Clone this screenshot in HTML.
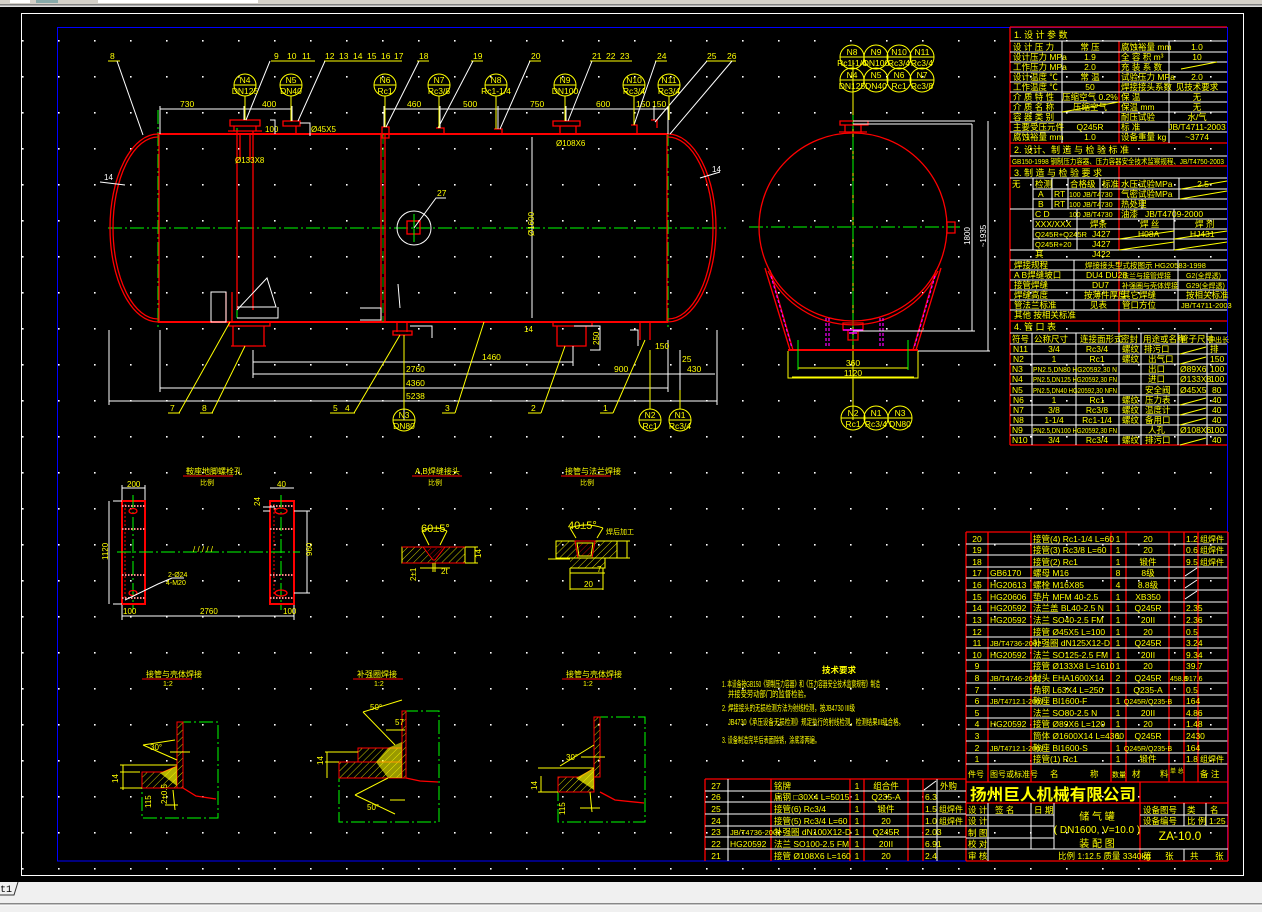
<!DOCTYPE html>
<html><head><meta charset="utf-8"><style>
html,body{margin:0;padding:0;background:#000;width:1262px;height:912px;overflow:hidden}
svg{display:block}
text{font-family:"Liberation Sans Narrow","Liberation Sans","WenQuanYi Zen Hei","Noto Sans CJK SC",sans-serif;fill:#ff0;font-size:8.5px}
.w{stroke:#fff;stroke-width:1;fill:none}
.r{stroke:#f00;stroke-width:1.3;fill:none}
.r2{stroke:#f00;stroke-width:2;fill:none}
.y{stroke:#ff0;stroke-width:1;fill:none}
.g{stroke:#0f0;stroke-width:1;fill:none;stroke-dasharray:14 3 2 3}
.gs{stroke:#0f0;stroke-width:1;fill:none}
.m{stroke:#f0f;stroke-width:1.2;fill:none;stroke-dasharray:3 2}
.c{text-anchor:middle}
.big{font-size:16px;font-weight:bold}
</style></head><body>
<svg width="1262" height="912" viewBox="0 0 1262 912" xmlns="http://www.w3.org/2000/svg">
<defs>
<pattern id="dots" x="22" y="4" width="36" height="36" patternUnits="userSpaceOnUse"><rect x="0" y="0" width="1.6" height="1.6" fill="#fff"/></pattern>
<pattern id="hat" width="5" height="5" patternUnits="userSpaceOnUse" patternTransform="rotate(45)"><line x1="0" y1="0" x2="0" y2="5" stroke="#ff0" stroke-width="0.8"/></pattern>
<pattern id="hatr" width="4" height="4" patternUnits="userSpaceOnUse" patternTransform="rotate(45)"><line x1="0" y1="0" x2="0" y2="4" stroke="#f00" stroke-width="0.8"/></pattern>
</defs>
<rect x="0" y="0" width="1262" height="912" fill="#000"/>
<rect x="0" y="0" width="1262" height="4" fill="#d4d0c8"/>
<rect x="10" y="0" width="20" height="3" fill="#fff"/><rect x="36" y="0" width="22" height="3" fill="#8aa"/><rect x="98" y="0" width="160" height="3" fill="#fff"/>
<rect x="0" y="4" width="1262" height="1.5" fill="#808080"/><rect x="0" y="5.5" width="1262" height="1.5" fill="#e0e0e0"/>
<rect x="0" y="882" width="1262" height="30" fill="#f0f0f0"/>
<rect x="0" y="903" width="1262" height="1.5" fill="#888"/><rect x="0" y="904.5" width="1262" height="1" fill="#fff"/>
<path d="M0,895 L14,895 L18,882" stroke="#333" fill="none"/>
<text x="0" y="892" style="fill:#000;font-family:'Liberation Mono',monospace;font-size:10px">t1</text>
<path d="M1,844 L12,864 M12,844 L1,864" class="w"/>
<rect x="0" y="7" width="1262" height="875" fill="url(#dots)"/>
<rect x="0" y="7" width="21" height="875" fill="#000"/>
<rect x="1243.5" y="7" width="19" height="875" fill="#000"/>
<rect x="21.5" y="13.5" width="1222" height="862" class="w"/>
<rect x="57.5" y="27.5" width="1170" height="833.5" stroke="#00f" fill="none"/>

<!-- ===== main vessel ===== -->
<path d="M108,228 L726,228" class="g"/>
<path d="M158,110 L158,330 M668,110 L668,330 M237,128 L237,318" class="g"/>
<path d="M158,134 L668,134 M158,322 L668,322" class="r2"/>
<path d="M158,134 A48,94 0 0 0 158,322 M158,137 A45,91 0 0 0 158,319" class="r"/>
<path d="M668,134 A48,94 0 0 1 668,322 M668,137 A45,91 0 0 1 668,319" class="r"/>
<path d="M159,134 L159,322 M667,134 L667,322" class="r"/>
<path d="M381,134 L381,322 M385,134 L385,322" class="r"/>
<path d="M383,134 L383,322" stroke="#0f0" stroke-width="0.7" stroke-dasharray="10 3"/>
<path d="M237,131 L237,310 M253,131 L253,310 M240,134 L240,160 M250,134 L250,160" class="r"/>
<path d="M230,120 L260,120 L260,126 L230,126 Z M234,126 L256,126 L256,131 L234,131 Z M228,131 L262,131" class="r"/>
<path d="M283,121 L300,121 L300,126 L283,126 Z M287,126 L296,126 L296,134" class="r"/>
<path d="M553,121 L580,121 L580,126 L553,126 Z M557,126 L576,126 L576,134 M560,126 L560,134" class="r"/>
<path d="M382,127 L389,127 L389,138 L382,138 Z M436,128 L444,128 L444,134 M494,129 L502,129 L502,134 M631,125 L637,125 L637,134 M651,120 L657,120 L657,128" class="r"/>
<path d="M229,322 L270,322 L270,326 L229,326 Z M233,326 L233,346 L264,346 L264,326 M231,346 L266,346" class="r"/>
<path d="M553,322 L592,322 L592,326 L553,326 Z M557,326 L557,346 L586,346 L586,326" class="r"/>
<path d="M397,322 L397,332 M407,322 L407,332 M393,331 L412,331 L412,335 L393,335 Z" class="r"/>
<path d="M640,322 L640,340 M650,322 L650,340" class="r"/>
<path d="M226,292 L226,322 M232,292 L232,322" class="r"/>
<path d="M237,310 L267,278 L276,307 L237,307 M237,318 L278,318 L278,307" class="w"/>
<path d="M398,284 L400,308 M360,308 L381,308 L381,320 L360,320" class="w"/>
<circle cx="414" cy="228" r="17" class="w"/><rect x="407" y="221" width="13" height="13" class="r"/>
<path d="M414,214 L414,242" class="gs"/>
<path d="M414,228 L436,198 L446,198" class="w"/><text x="437" y="196">27</text>
<path d="M532,137 L532,318" class="w"/><text x="534" y="236" transform="rotate(-90 534 236)" style="font-size:8px">Ø1600</text>
<path d="M160,109 L292,109 M384,109 L668,109" class="w"/>
<text x="180" y="107">730</text><text x="262" y="107">400</text><text x="407" y="107">460</text><text x="463" y="107">500</text><text x="530" y="107">750</text><text x="596" y="107">600</text><text x="636" y="107">150</text><text x="652" y="107">150</text>
<path d="M160,106 L160,134 M244,106 L244,120 M292,106 L292,121 M384,106 L384,127 M440,106 L440,128 M498,106 L498,129 M566,106 L566,121 M634,106 L634,125 M654,106 L654,120 M668,106 L668,134" class="w" stroke-width="0.6"/>
<text x="265" y="132" style="font-size:8px">100</text><text x="311" y="132" style="font-size:8px">Ø45X5</text><text x="235" y="163" style="font-size:8px">Ø133X8</text><text x="556" y="146" style="font-size:8px">Ø108X6</text>
<path d="M270,120 L275,120 L275,134 M300,123 L310,123 L310,136" class="w"/>
<path d="M253,362 L573,362 M404,362 L404,420 M253,374 L715,374 M160,388 L668,388 M109,401 L717,401" class="w"/>
<path d="M109,330 L109,405 M717,330 L717,405 M160,330 L160,392 M668,340 L668,392 M253,350 L253,378 M573,346 L573,366 M680,350 L680,390" class="w" stroke-width="0.6"/>
<text x="482" y="360">1460</text><text x="406" y="372">2760</text><text x="614" y="372">900</text><text x="687" y="372">430</text><text x="406" y="386">4360</text><text x="406" y="399">5238</text>
<text x="682" y="362">25</text><text x="655" y="349">150</text><text x="524" y="332" style="font-size:8px">14</text>
<path d="M574,326 L600,326 L600,350 L590,350 M630,330 L638,330 L638,346 M410,326 L432,326 L432,338" class="w"/>
<text x="592" y="342" transform="rotate(-90 597 340)" style="font-size:8px">250</text>
<path d="M211,292 L226,292 L226,322 L211,322 Z" class="w"/>
<text x="104" y="180" style="font-size:8px;fill:#fff">14</text><path d="M100,182 L125,185" class="w"/>
<text x="712" y="172" style="font-size:8px;fill:#fff">14</text><path d="M700,178 L720,172" class="w"/>
<path d="M108,61 L120,61 M271,61 L315,61 M324,61 L402,61 M417,61 L429,61 M471,61 L483,61 M529,61 L541,61 M590,61 L632,61 M655,61 L667,61 M706,61 L736,61" class="y"/>
<path d="M117,61 L143,135 M270,61 L246,120 M325,61 L298,121 M419,61 L386,127 M473,61 L438,128 M530,61 L500,129 M592,61 L568,121 M656,61 L634,125 M707,61 L655,122 M732,61 L670,134" class="w"/>
<text x="110" y="59">8</text><text x="274" y="59">9</text><text x="287" y="59">10</text><text x="302" y="59">11</text>
<text x="325" y="59">12</text><text x="339" y="59">13</text><text x="353" y="59">14</text><text x="367" y="59">15</text><text x="381" y="59">16</text><text x="394" y="59">17</text>
<text x="419" y="59">18</text><text x="473" y="59">19</text><text x="531" y="59">20</text><text x="592" y="59">21</text><text x="606" y="59">22</text><text x="620" y="59">23</text><text x="657" y="59">24</text><text x="707" y="59">25</text><text x="727" y="59">26</text>
<path d="M168,413 L180,413 M200,413 L213,413 M330,413 L355,413 M442,413 L455,413 M528,413 L541,413 M600,413 L613,413" class="y"/>
<path d="M179,413 L230,322 M212,413 L245,346 M354,413 L400,335 M455,413 L484,322 M541,413 L565,346 M613,413 L645,340" class="y"/>
<text x="170" y="411">7</text><text x="202" y="411">8</text><text x="333" y="411">5</text><text x="345" y="411">4</text><text x="445" y="411">3</text><text x="531" y="411">2</text><text x="603" y="411">1</text>
<g class="y">
<path d="M245,96 L245,120 M291,96 L291,121 M385,96 L385,127 M439,96 L439,128 M496,96 L496,129 M565,96 L565,121 M634,96 L634,125 M669,96 L669,120"/>
<circle cx="245" cy="85" r="11"/><circle cx="291" cy="85" r="11"/><circle cx="385" cy="85" r="11"/><circle cx="439" cy="85" r="11"/><circle cx="496" cy="85" r="11"/><circle cx="565" cy="85" r="11"/><circle cx="634" cy="85" r="11"/><circle cx="669" cy="85" r="11"/>
<path d="M234,85 L256,85 M280,85 L302,85 M374,85 L396,85 M428,85 L450,85 M485,85 L507,85 M554,85 L576,85 M623,85 L645,85 M658,85 L680,85"/>
<path d="M404,335 L404,409 M650,350 L650,409 M680,390 L680,409"/>
<circle cx="404" cy="420" r="11"/><circle cx="650" cy="420" r="11"/><circle cx="680" cy="420" r="11"/>
<path d="M393,420 L415,420 M639,420 L661,420 M669,420 L691,420"/>
</g>
<g style="font-size:8px">
<text x="245" y="83" class="c">N4</text><text x="245" y="94" class="c">DN125</text>
<text x="291" y="83" class="c">N5</text><text x="291" y="94" class="c">DN40</text>
<text x="385" y="83" class="c">N6</text><text x="385" y="94" class="c">Rc1</text>
<text x="439" y="83" class="c">N7</text><text x="439" y="94" class="c">Rc3/8</text>
<text x="496" y="83" class="c">N8</text><text x="496" y="94" class="c">Rc1-1/4</text>
<text x="565" y="83" class="c">N9</text><text x="565" y="94" class="c">DN100</text>
<text x="634" y="83" class="c">N10</text><text x="634" y="94" class="c">Rc3/4</text>
<text x="669" y="83" class="c">N11</text><text x="669" y="94" class="c">Rc3/4</text>
<text x="404" y="418" class="c">N3</text><text x="404" y="429" class="c">DN80</text>
<text x="650" y="418" class="c">N2</text><text x="650" y="429" class="c">Rc1</text>
<text x="680" y="418" class="c">N1</text><text x="680" y="429" class="c">Rc3/4</text>
</g>

<!-- ===== side view ===== -->
<path d="M749,227 L960,227" class="g"/>
<path d="M853,60 L853,420" class="y"/>
<path d="M853,115 L853,345" class="g"/>
<circle cx="853" cy="227" r="94" class="r"/>
<path d="M768,266 A94,94 0 0 0 938,266" class="r" transform="translate(0,5)"/>
<path d="M840,121 L868,121 L868,125 L840,125 Z M845,125 L845,132 L861,132 L861,125 M839,132 L867,132" class="r"/>
<path d="M947,222 L955,222 L955,233 L947,233 Z" class="r"/>
<path d="M765,268 L790,350 M770,270 L793,350 M941,268 L916,350 M936,270 L913,350" class="r"/>
<path d="M771,276 L792,348 M935,276 L914,348 M826,318 L826,348 M829,318 L829,348 M880,318 L880,348 M883,318 L883,348" class="m"/>
<path d="M843,323 L863,323 L863,330 L843,330 Z M848,330 L858,330 L858,340 L848,340 Z" class="r"/><path d="M843,330 L863,330 M849,333 L857,333" stroke="#f0f" stroke-width="1.5"/>
<path d="M788,350 L918,350" class="r2"/>
<path d="M788,351 L788,378 L918,378 L918,351 M798,368 L908,368 M792,377 L914,377" class="y"/>
<path d="M798,340 L798,370 M908,340 L908,370" class="gs"/>
<text x="853" y="366" class="c">360</text><text x="853" y="376" class="c">1120</text>
<path d="M853,121 L975,121 M853,124 L972,124 M853,331 L975,331 M918,351 L990,351 M972,124 L972,331 M988,121 L988,351" class="w"/>
<text x="970" y="236" transform="rotate(-90 970 236)" style="fill:#fff;font-size:8px" class="c">1800</text>
<text x="986" y="236" transform="rotate(-90 986 236)" style="fill:#fff;font-size:8px" class="c">~1935</text>
<g class="y">
<circle cx="852" cy="57" r="12"/><circle cx="876" cy="57" r="12"/><circle cx="899" cy="57" r="12"/><circle cx="922" cy="57" r="12"/>
<circle cx="852" cy="80" r="12"/><circle cx="876" cy="80" r="12"/><circle cx="899" cy="80" r="12"/><circle cx="922" cy="80" r="12"/>
<path d="M840,57 L934,57 M840,80 L934,80"/>
<circle cx="853" cy="418" r="12"/><circle cx="876" cy="418" r="12"/><circle cx="900" cy="418" r="12"/>
<path d="M841,418 L912,418"/>
</g>
<g style="font-size:7.5px">
<text x="852" y="55" class="c">N8</text><text x="852" y="66" class="c">Rc1-1/4</text>
<text x="876" y="55" class="c">N9</text><text x="876" y="66" class="c">DN100</text>
<text x="899" y="55" class="c">N10</text><text x="899" y="66" class="c">Rc3/4</text>
<text x="922" y="55" class="c">N11</text><text x="922" y="66" class="c">Rc3/4</text>
<text x="852" y="78" class="c">N4</text><text x="852" y="89" class="c">DN125</text>
<text x="876" y="78" class="c">N5</text><text x="876" y="89" class="c">DN40</text>
<text x="899" y="78" class="c">N6</text><text x="899" y="89" class="c">Rc1</text>
<text x="922" y="78" class="c">N7</text><text x="922" y="89" class="c">Rc3/8</text>
<text x="853" y="416" class="c">N2</text><text x="853" y="427" class="c">Rc1</text>
<text x="876" y="416" class="c">N1</text><text x="876" y="427" class="c">Rc3/4</text>
<text x="900" y="416" class="c">N3</text><text x="900" y="427" class="c">DN80</text>
</g>

<!-- ===== top-right table ===== -->
<path d="M1010,27 L1010,445 M1010,27 L1227,27" class="r"/>
<path d="M1010,143 L1227,143 M1010,166 L1227,166 M1010,321 L1227,321 M1010,445 L1227,445 M1119,41 L1119,143 M1119,166 L1119,250 M1119,260 L1119,333" class="r"/>
<g class="w">
<path d="M1010,41 L1227,41 M1010,52 L1227,52 M1010,62 L1227,62 M1010,72 L1227,72 M1010,82 L1227,82 M1010,92 L1227,92 M1010,102 L1227,102 M1010,112 L1227,112 M1010,122 L1227,122 M1010,132 L1227,132 M1010,156 L1227,156"/>
<path d="M1062,41 L1062,143 M1169,41 L1169,143"/>
<path d="M1010,178 L1227,178 M1033,189 L1227,189 M1033,199 L1227,199 M1010,209 L1227,209 M1033,219 L1227,219 M1033,229 L1227,229 M1033,239 L1227,239 M1010,250 L1227,250 M1010,260 L1227,260 M1010,270 L1227,270 M1010,280 L1227,280 M1010,290 L1227,290 M1010,300 L1227,300 M1010,310 L1227,310 M1010,333 L1227,333"/>
<path d="M1033,178 L1033,250 M1052,178 L1052,209 M1068,178 L1068,209 M1100,178 L1100,209 M1179,178 L1179,199 M1142,199 L1142,209 M1077,209 L1077,250 M1174,209 L1174,250 M1074,260 L1074,310 M1178,260 L1178,310"/>
<path d="M1010,344 L1227,344 M1010,354 L1227,354 M1010,364 L1227,364 M1010,374 L1227,374 M1010,384 L1227,384 M1010,395 L1227,395 M1010,405 L1227,405 M1010,415 L1227,415 M1010,425 L1227,425 M1010,435 L1227,435"/>
<path d="M1032,333 L1032,445 M1076,333 L1076,445 M1119,333 L1119,445 M1141,333 L1141,445 M1178,333 L1178,445 M1207,333 L1207,445"/>
</g>
<g class="y" stroke-width="0.8">
<path d="M1062,112 L1119,102 M1181,69 L1217,62 M1181,189 L1227,181 M1180,199 L1227,191 M1119,239 L1174,231 M1174,239 L1227,231 M1119,250 L1174,242 M1174,250 L1227,242 M1180,354 L1206,347 M1180,364 L1206,357 M1180,405 L1206,398 M1180,415 L1206,408 M1180,425 L1206,418 M1180,445 L1206,438"/>
</g>
<g style="font-size:8px">
<text x="1014" y="38" style="font-size:9px">1. 设 计 参 数</text>
<text x="1013" y="50">设 计 压 力</text><text x="1090" y="50" class="c">常 压</text><text x="1121" y="50">腐蚀裕量 mm</text><text x="1197" y="50" class="c">1.0</text>
<text x="1013" y="60">设计压力 MPa</text><text x="1090" y="60" class="c">1.9</text><text x="1121" y="60">全 容 积 m³</text><text x="1197" y="60" class="c">10</text>
<text x="1013" y="70">工作压力 MPa</text><text x="1090" y="70" class="c">2.0</text><text x="1121" y="70">充 装 系 数</text>
<text x="1013" y="80">设计温度 ℃</text><text x="1090" y="80" class="c">常 温</text><text x="1121" y="80">试验压力 MPa</text><text x="1197" y="80" class="c">2.0</text>
<text x="1013" y="90">工作温度 ℃</text><text x="1090" y="90" class="c">50</text><text x="1121" y="90">焊接接头系数</text><text x="1197" y="90" class="c">见技术要求</text>
<text x="1013" y="100">介 质 特 性</text><text x="1090" y="100" class="c">压缩空气 0.2%</text><text x="1121" y="100">保 温</text><text x="1197" y="100" class="c">无</text>
<text x="1013" y="110">介 质 名 称</text><text x="1090" y="110" class="c">压缩空气</text><text x="1121" y="110">保温 mm</text><text x="1197" y="110" class="c">无</text>
<text x="1013" y="120">容 器 类 别</text><text x="1121" y="120">耐压试验</text><text x="1197" y="120" class="c">水/气</text>
<text x="1013" y="130">主要受压元件</text><text x="1090" y="130" class="c">Q245R</text><text x="1121" y="130">标 准</text><text x="1197" y="130" class="c">JB/T4711-2003</text>
<text x="1013" y="140">腐蚀裕量 mm</text><text x="1090" y="140" class="c">1.0</text><text x="1121" y="140">设备重量 kg</text><text x="1197" y="140" class="c">~3774</text>
<text x="1014" y="153" style="font-size:9px">2. 设计、制 造 与 检 验 标 准</text>
<text x="1012" y="164" style="font-size:7.5px" textLength="212" lengthAdjust="spacingAndGlyphs">GB150-1998 钢制压力容器、压力容器安全技术监察规程、JB/T4750-2003</text>
<text x="1014" y="176" style="font-size:9px">3. 制 造 与 检 验 要 求</text>
<text x="1012" y="187">无</text><text x="1035" y="187">检测</text><text x="1070" y="187">合格级</text><text x="1102" y="187">标准</text><text x="1121" y="187">水压试验MPa</text><text x="1203" y="187" class="c">2.5</text>
<text x="1038" y="197">A</text><text x="1054" y="197">RT</text><text x="1069" y="197" style="font-size:7px">100 JB/T4730</text><text x="1121" y="197">气密试验MPa</text>
<text x="1038" y="207">B</text><text x="1054" y="207">RT</text><text x="1069" y="207" style="font-size:7px">100 JB/T4730</text><text x="1121" y="207">热处理</text>
<text x="1035" y="217">C D</text><text x="1069" y="217" style="font-size:7px">100 JB/T4730</text><text x="1121" y="217">油漆</text><text x="1174" y="217" class="c">JB/T4709-2000</text>
<text x="1035" y="227">XXX/XXX</text><text x="1090" y="227">焊条</text><text x="1140" y="227">焊 丝</text><text x="1195" y="227">焊 剂</text>
<text x="1035" y="237" style="font-size:7.5px">Q245R+Q245R</text><text x="1092" y="237">J427</text><text x="1138" y="237">H08A</text><text x="1190" y="237">HJ431</text>
<text x="1035" y="247" style="font-size:7.5px">Q245R+20</text><text x="1092" y="247">J427</text>
<text x="1035" y="257">其</text><text x="1092" y="257">J422</text>
<text x="1014" y="268">焊接规程</text><text x="1085" y="268" style="font-size:7.5px">焊接接头型式按图示 HG20583-1998</text>
<text x="1014" y="278">A B焊缝坡口</text><text x="1086" y="278">DU4 DU26</text><text x="1122" y="278" style="font-size:7px">法兰与接管焊接</text><text x="1186" y="278" style="font-size:7px">G2(全焊透)</text>
<text x="1014" y="288">接管焊缝</text><text x="1092" y="288">DU7</text><text x="1122" y="288" style="font-size:7px">补强圈与壳体焊接</text><text x="1186" y="288" style="font-size:7px">G29(全焊透)</text>
<text x="1014" y="298">焊缝高度</text><text x="1084" y="298">按薄件厚度</text><text x="1122" y="298">其它焊缝</text><text x="1186" y="298">按相关标准</text>
<text x="1014" y="308">管法兰标准</text><text x="1090" y="308">见表</text><text x="1122" y="308">管口方位</text><text x="1181" y="308" style="font-size:7.5px">JB/T4711-2003</text>
<text x="1014" y="318">其他 按相关标准</text>
<text x="1014" y="330" style="font-size:9px">4. 管 口 表</text>
<text x="1012" y="342">符号</text><text x="1034" y="342">公称尺寸</text><text x="1080" y="342">连接面形式</text><text x="1121" y="342">密封</text><text x="1143" y="342">用途或名称</text><text x="1180" y="342">管子尺寸</text><text x="1208" y="342" style="font-size:7px">伸出长</text>
</g>
<g style="font-size:8px">
<text x="1013" y="352">N11</text><text x="1054" y="352" class="c">3/4</text><text x="1097" y="352" class="c">Rc3/4</text><text x="1122" y="352">螺纹</text><text x="1144" y="352">排污口</text><text x="1210" y="352">排</text>
<text x="1013" y="362">N2</text><text x="1054" y="362" class="c">1</text><text x="1097" y="362" class="c">Rc1</text><text x="1122" y="362">螺纹</text><text x="1148" y="362">出气口</text><text x="1210" y="362">150</text>
<text x="1012" y="372">N3</text><text x="1033" y="372" style="font-size:7px" textLength="84" lengthAdjust="spacingAndGlyphs">PN2.5,DN80 HG20592,30 N</text><text x="1148" y="372">出口</text><text x="1180" y="372">Ø89X6</text><text x="1210" y="372">100</text>
<text x="1012" y="382">N4</text><text x="1033" y="382" style="font-size:7px" textLength="84" lengthAdjust="spacingAndGlyphs">PN2.5,DN125 HG20592,30 FN</text><text x="1148" y="382">进口</text><text x="1180" y="382">Ø133X8</text><text x="1210" y="382">100</text>
<text x="1012" y="393">N5</text><text x="1033" y="393" style="font-size:7px" textLength="84" lengthAdjust="spacingAndGlyphs">PN2.5,DN40 HG20592,30 NFN</text><text x="1145" y="393">安全阀</text><text x="1180" y="393">Ø45X5</text><text x="1212" y="393">80</text>
<text x="1013" y="403">N6</text><text x="1054" y="403" class="c">1</text><text x="1097" y="403" class="c">Rc1</text><text x="1122" y="403">螺纹</text><text x="1145" y="403">压力表</text><text x="1212" y="403">40</text>
<text x="1013" y="413">N7</text><text x="1054" y="413" class="c">3/8</text><text x="1097" y="413" class="c">Rc3/8</text><text x="1122" y="413">螺纹</text><text x="1145" y="413">温度计</text><text x="1212" y="413">40</text>
<text x="1013" y="423">N8</text><text x="1054" y="423" class="c">1-1/4</text><text x="1097" y="423" class="c">Rc1-1/4</text><text x="1122" y="423">螺纹</text><text x="1145" y="423">备用口</text><text x="1212" y="423">40</text>
<text x="1012" y="433">N9</text><text x="1033" y="433" style="font-size:7px" textLength="84" lengthAdjust="spacingAndGlyphs">PN2.5,DN100 HG20592,30 FN</text><text x="1148" y="433">人孔</text><text x="1180" y="433">Ø108X6</text><text x="1210" y="433">100</text>
<text x="1012" y="443">N10</text><text x="1054" y="443" class="c">3/4</text><text x="1097" y="443" class="c">Rc3/4</text><text x="1122" y="443">螺纹</text><text x="1145" y="443">排污口</text><text x="1212" y="443">40</text>
</g>

<!-- ===== parts list right ===== -->
<path d="M966,532 L1228,532 M966,532 L966,861 M988,532 L988,782 M1031,532 L1031,782 M1111,532 L1111,782 M1126,532 L1126,782 M1169,532 L1169,782 M1184,532 L1184,782 M1198,532 L1198,782 M966,782 L1228,782" class="r"/>
<path d="M966,544 L1228,544 M966,555 L1228,555 M966,567 L1228,567 M966,578 L1228,578 M966,590 L1228,590 M966,602 L1228,602 M966,613 L1228,613 M966,625 L1228,625 M966,637 L1228,637 M966,648 L1228,648 M966,660 L1228,660 M966,671 L1228,671 M966,683 L1228,683 M966,695 L1228,695 M966,706 L1228,706 M966,718 L1228,718 M966,729 L1228,729 M966,741 L1228,741 M966,753 L1228,753 M966,764 L1228,764" class="w"/>
<path d="M1185,576 L1197,568 M1185,588 L1197,580 M1185,599 L1197,591" class="w"/>
<g style="font-size:9px">
<text x="977" y="542" class="c">20</text><text x="1033" y="542">接管(4) Rc1-1/4 L=60</text><text x="1118" y="542" class="c">1</text><text x="1148" y="542" class="c">20</text><text x="1186" y="542">1.2</text><text x="1200" y="542" style="font-size:8px">组焊件</text>
<text x="977" y="553" class="c">19</text><text x="1033" y="553">接管(3) Rc3/8 L=60</text><text x="1118" y="553" class="c">1</text><text x="1148" y="553" class="c">20</text><text x="1186" y="553">0.6</text><text x="1200" y="553" style="font-size:8px">组焊件</text>
<text x="977" y="565" class="c">18</text><text x="1033" y="565">接管(2) Rc1</text><text x="1118" y="565" class="c">1</text><text x="1148" y="565" class="c">锻件</text><text x="1186" y="565">9.5</text><text x="1200" y="565" style="font-size:8px">组焊件</text>
<text x="977" y="576" class="c">17</text><text x="990" y="576">GB6170</text><text x="1033" y="576">螺母 M16</text><text x="1118" y="576" class="c">8</text><text x="1148" y="576" class="c">8级</text>
<text x="977" y="588" class="c">16</text><text x="990" y="588">HG20613</text><text x="1033" y="588">螺栓 M16X85</text><text x="1118" y="588" class="c">4</text><text x="1148" y="588" class="c">8.8级</text>
<text x="977" y="600" class="c">15</text><text x="990" y="600">HG20606</text><text x="1033" y="600">垫片 MFM 40-2.5</text><text x="1118" y="600" class="c">1</text><text x="1148" y="600" class="c">XB350</text>
<text x="977" y="611" class="c">14</text><text x="990" y="611">HG20592</text><text x="1033" y="611">法兰盖 BL40-2.5 N</text><text x="1118" y="611" class="c">1</text><text x="1148" y="611" class="c">Q245R</text><text x="1186" y="611">2.35</text>
<text x="977" y="623" class="c">13</text><text x="990" y="623">HG20592</text><text x="1033" y="623">法兰 SO40-2.5 FM</text><text x="1118" y="623" class="c">1</text><text x="1148" y="623" class="c">20II</text><text x="1186" y="623">2.36</text>
<text x="977" y="635" class="c">12</text><text x="1033" y="635">接管 Ø45X5 L=100</text><text x="1118" y="635" class="c">1</text><text x="1148" y="635" class="c">20</text><text x="1186" y="635">0.5</text>
<text x="977" y="646" class="c">11</text><text x="990" y="646" style="font-size:7.5px">JB/T4736-2002</text><text x="1033" y="646">补强圈 dN125X12-D</text><text x="1118" y="646" class="c">1</text><text x="1148" y="646" class="c">Q245R</text><text x="1186" y="646">3.24</text>
<text x="977" y="658" class="c">10</text><text x="990" y="658">HG20592</text><text x="1033" y="658">法兰 SO125-2.5 FM</text><text x="1118" y="658" class="c">1</text><text x="1148" y="658" class="c">20II</text><text x="1186" y="658">9.34</text>
<text x="977" y="669" class="c">9</text><text x="1033" y="669">接管 Ø133X8 L=1610</text><text x="1118" y="669" class="c">1</text><text x="1148" y="669" class="c">20</text><text x="1186" y="669">39.7</text>
<text x="977" y="681" class="c">8</text><text x="990" y="681" style="font-size:7.5px">JB/T4746-2002</text><text x="1033" y="681">封头 EHA1600X14</text><text x="1118" y="681" class="c">2</text><text x="1148" y="681" class="c">Q245R</text><text x="1170" y="681" style="font-size:7px">458.8</text><text x="1185" y="681" style="font-size:7px">917.6</text>
<text x="977" y="693" class="c">7</text><text x="1033" y="693">角钢 L63X4 L=250</text><text x="1118" y="693" class="c">1</text><text x="1148" y="693" class="c">Q235-A</text><text x="1186" y="693">0.5</text>
<text x="977" y="704" class="c">6</text><text x="990" y="704" style="font-size:7px">JB/T4712.1-2007</text><text x="1033" y="704">鞍座 BI1600-F</text><text x="1118" y="704" class="c">1</text><text x="1148" y="704" class="c" style="font-size:7px">Q245R/Q235-B</text><text x="1186" y="704">164</text>
<text x="977" y="716" class="c">5</text><text x="1033" y="716">法兰 SO80-2.5 N</text><text x="1118" y="716" class="c">1</text><text x="1148" y="716" class="c">20II</text><text x="1186" y="716">4.86</text>
<text x="977" y="727" class="c">4</text><text x="990" y="727">HG20592</text><text x="1033" y="727">接管 Ø89X6 L=120</text><text x="1118" y="727" class="c">1</text><text x="1148" y="727" class="c">20</text><text x="1186" y="727">1.48</text>
<text x="977" y="739" class="c">3</text><text x="1033" y="739" style="font-size:8.5px">筒体 Ø1600X14 L=4360</text><text x="1118" y="739" class="c">1</text><text x="1148" y="739" class="c">Q245R</text><text x="1186" y="739">2430</text>
<text x="977" y="751" class="c">2</text><text x="990" y="751" style="font-size:7px">JB/T4712.1-2007</text><text x="1033" y="751">鞍座 BI1600-S</text><text x="1118" y="751" class="c">1</text><text x="1148" y="751" class="c" style="font-size:7px">Q245R/Q235-B</text><text x="1186" y="751">164</text>
<text x="977" y="762" class="c">1</text><text x="1033" y="762">接管(1) Rc1</text><text x="1118" y="762" class="c">1</text><text x="1148" y="762" class="c">锻件</text><text x="1186" y="762">1.8</text><text x="1200" y="762" style="font-size:8px">组焊件</text>
<text x="968" y="777" style="font-size:8px">件号</text><text x="990" y="777" style="font-size:8px">图号或标准号</text><text x="1050" y="777">名</text><text x="1090" y="777">称</text><text x="1112" y="777" style="font-size:7px">数量</text><text x="1132" y="777">材</text><text x="1160" y="777">料</text><text x="1170" y="773" style="font-size:6px">单 总</text><text x="1200" y="777">备 注</text>
</g>

<!-- ===== bottom-left parts table ===== -->
<path d="M705,779 L966,779 M705,779 L705,861 M771,779 L771,861 M850,779 L850,861 M864,779 L864,861 M908,779 L908,861 M923,779 L923,861" class="r"/>
<path d="M705,791 L966,791 M705,802 L966,802 M705,814 L966,814 M705,826 L966,826 M705,837 L966,837 M705,849 L966,849 M728,779 L728,861 M937,779 L937,861" class="w"/>
<path d="M924,790 L936,781" class="w"/>
<g style="font-size:9px">
<text x="716" y="789" class="c">27</text><text x="774" y="789">铭牌</text><text x="857" y="789" class="c">1</text><text x="886" y="789" class="c">组合件</text><text x="940" y="789">外购</text>
<text x="716" y="800" class="c">26</text><text x="774" y="800">扁钢 □30X4 L=5015</text><text x="857" y="800" class="c">1</text><text x="886" y="800" class="c">Q235-A</text><text x="925" y="800">6.3</text>
<text x="716" y="812" class="c">25</text><text x="774" y="812">接管(6) Rc3/4</text><text x="857" y="812" class="c">1</text><text x="886" y="812" class="c">锻件</text><text x="925" y="812">1.5</text><text x="939" y="812" style="font-size:8px">组焊件</text>
<text x="716" y="824" class="c">24</text><text x="774" y="824">接管(5) Rc3/4 L=60</text><text x="857" y="824" class="c">1</text><text x="886" y="824" class="c">20</text><text x="925" y="824">1.0</text><text x="939" y="824" style="font-size:8px">组焊件</text>
<text x="716" y="835" class="c">23</text><text x="730" y="835" style="font-size:7.5px">JB/T4736-2002</text><text x="774" y="835">补强圈 dN100X12-D</text><text x="857" y="835" class="c">1</text><text x="886" y="835" class="c">Q245R</text><text x="925" y="835">2.03</text>
<text x="716" y="847" class="c">22</text><text x="730" y="847">HG20592</text><text x="774" y="847">法兰 SO100-2.5 FM</text><text x="857" y="847" class="c">1</text><text x="886" y="847" class="c">20II</text><text x="925" y="847">6.91</text>
<text x="716" y="859" class="c">21</text><text x="774" y="859">接管 Ø108X6 L=160</text><text x="857" y="859" class="c">1</text><text x="886" y="859" class="c">20</text><text x="925" y="859">2.4</text>
</g>

<!-- ===== title block ===== -->
<path d="M966,803 L1228,803 M1140,782 L1140,861 M966,861 L1228,861 M1228,532 L1228,861" class="r"/>
<path d="M966,815 L1054,815 M966,826 L1054,826 M966,838 L1054,838 M966,849 L1054,849 M988,803 L988,861 M1031,803 L1031,849 M1054,803 L1054,849 M1054,849 L1140,849 M1140,815 L1228,815 M1140,826 L1228,826 M1140,849 L1228,849 M1184,803 L1184,826 M1184,849 L1184,861 M1206,803 L1206,826" class="w"/>
<text x="970" y="800" class="big" textLength="166" lengthAdjust="spacingAndGlyphs">扬州巨人机械有限公司</text>
<g style="font-size:8px">
<text x="968" y="813">设 计</text><text x="995" y="813">签 名</text><text x="1034" y="813">日 期</text>
<text x="968" y="824">设 计</text><text x="968" y="836">制 图</text><text x="968" y="847">校 对</text><text x="968" y="859">审 核</text>
<text x="1143" y="813">设备图号</text><text x="1187" y="813">类</text><text x="1210" y="813">名</text>
<text x="1143" y="824">设备编号</text><text x="1187" y="824">比 例</text><text x="1209" y="824">1:25</text>
<text x="1143" y="859">第</text><text x="1165" y="859">张</text><text x="1190" y="859">共</text><text x="1215" y="859">张</text>
<text x="1058" y="859">比例 1:12.5 质量 3340kg</text>
</g>
<text x="1097" y="820" class="c" style="font-size:10px">储 气 罐</text>
<text x="1097" y="833" class="c" style="font-size:10px">( DN1600, V=10.0 )</text>
<text x="1097" y="847" class="c" style="font-size:10px">装 配 图</text>
<text x="1180" y="840" class="c" style="font-size:12px">ZA-10.0</text>

<!-- ===== technical notes ===== -->
<g style="font-size:8.5px">
<text x="822" y="673" style="font-weight:bold">技术要求</text>
<text x="722" y="687" textLength="158" lengthAdjust="spacingAndGlyphs">1. 本设备按GB150《钢制压力容器》和《压力容器安全技术监察规程》制造</text>
<text x="728" y="697" textLength="82" lengthAdjust="spacingAndGlyphs">并接受劳动部门的监督检验。</text>
<text x="722" y="711" textLength="133" lengthAdjust="spacingAndGlyphs">2. 焊接接头的无损检测方法为射线检测，按JB4730 III级</text>
<text x="728" y="725" textLength="176" lengthAdjust="spacingAndGlyphs">JB4730《承压设备无损检测》规定执行的射线检测，检测结果III级合格。</text>
<text x="722" y="743" textLength="98" lengthAdjust="spacingAndGlyphs">3. 设备制造完毕后表面除锈，涂底漆两遍。</text>
</g>

<!-- ===== detail view 1 ===== -->
<text x="186" y="474" style="font-size:8px">鞍座地脚螺栓孔</text><path d="M183,476 L233,476" stroke="#f00"/><text x="200" y="485" style="font-size:7px">比例</text>
<rect x="122" y="501" width="23" height="103" class="r2"/><rect x="270" y="501" width="24" height="103" class="r2"/>
<path d="M125,504 L125,600 M274,504 L274,600" stroke="#f00" stroke-dasharray="2 2"/>
<path d="M122,506 L145,506 M122,529 L145,529 M122,575 L145,575 M122,598 L145,598 M270,506 L294,506 M270,529 L294,529 M270,575 L294,575 M270,598 L294,598" stroke="#f88" stroke-width="2" stroke-dasharray="1.5 1.5"/>
<path d="M117,552 L300,552" class="g"/><path d="M133,495 L133,610 M281,495 L281,610" class="g"/>
<ellipse cx="133" cy="511" rx="4" ry="2.5" class="r"/><ellipse cx="281" cy="511" rx="6" ry="3" class="r"/><ellipse cx="281" cy="593" rx="6" ry="3" class="r"/><ellipse cx="133" cy="593" rx="4" ry="2.5" class="r"/>
<path d="M122,488 L145,488 M122,485 L122,500 M145,485 L145,500 M270,488 L294,488 M113,501 L122,501 M113,604 L122,604 M109,501 L109,604 M122,616 L294,616 M122,605 L122,620 M294,605 L294,620 M294,511 L310,511 M294,593 L310,593 M307,511 L307,593 M263,511 L270,511 M263,507 L275,507" class="w"/>
<text x="127" y="487" style="font-size:8px">200</text><text x="277" y="487" style="font-size:8px">40</text>
<text x="108" y="560" transform="rotate(-90 108 560)" style="font-size:8px">1120</text>
<text x="312" y="556" transform="rotate(-90 312 556)" style="font-size:8px">960</text>
<text x="260" y="506" transform="rotate(-90 260 506)" style="font-size:8px">24</text>
<text x="200" y="614" style="font-size:8px">2760</text><text x="123" y="614" style="font-size:8px">100</text><text x="283" y="614" style="font-size:8px">100</text>
<path d="M125,600 L158,584 L172,578 L184,578" class="w"/><text x="168" y="577" style="font-size:7px">2-Ø24</text><text x="166" y="585" style="font-size:7px">4-M20</text>
<text x="193" y="552" style="font-size:8px">/ / / / /</text>

<!-- detail view 2 -->
<text x="415" y="474" style="font-size:8px">A,B焊缝接头</text><path d="M412,476 L462,476" stroke="#f00"/><text x="428" y="485" style="font-size:7px">比例</text>
<rect x="402" y="547" width="63" height="16" fill="url(#hat)" stroke="#ff0"/>
<path d="M402,547 L465,547 M402,563 L465,563" stroke="#f00"/>
<path d="M423,547 L433,560 L435,560 L445,547 Z" fill="#000" stroke="#f00"/>
<path d="M425,548 L433,558 L443,548" fill="url(#hatr)"/>
<path d="M422,531 L429,545 M447,531 L440,545 M422,531 Q434,525 447,531" class="y"/>
<text x="421" y="532" style="font-size:11px">60±5°</text>
<path d="M465,547 L478,547 M465,563 L478,563 M475,547 L475,563 M420,568 L450,568 M433,563 L433,572 M435,563 L435,572" class="y"/>
<text x="409" y="580" transform="rotate(-90 413 577)" style="font-size:8px">2±1</text><text x="441" y="574" style="font-size:8px">2t</text><text x="481" y="558" transform="rotate(-90 481 558)" style="font-size:8px">14</text>

<!-- detail view 3 -->
<text x="565" y="474" style="font-size:8px">接管与法兰焊接</text><path d="M561,476 L611,476" stroke="#f00"/><text x="580" y="485" style="font-size:7px">比例</text>
<rect x="556" y="541" width="61" height="17" fill="url(#hat)" stroke="#ff0"/>
<path d="M575,541 L595,541 L592,558 L578,558 Z" fill="#000" stroke="#f00"/>
<path d="M577,543 L593,543 L591,556 L579,556 Z" fill="url(#hatr)" stroke="#ff0"/>
<path d="M570,558 L605,558 L605,568 L570,568" fill="url(#hat)" stroke="#ff0"/>
<path d="M570,528 L576,538 M603,528 L597,538 M570,528 Q586,522 603,528 M570,573 L605,573 M570,589 L603,589 M570,568 L570,590 M603,568 L603,590 M617,541 L630,541 M617,558 L630,558 M627,541 L627,558 M548,559 L570,559" class="y"/>
<text x="568" y="529" style="font-size:11px">40±5°</text><text x="606" y="534" style="font-size:7px">焊后加工</text><text x="584" y="587" style="font-size:8px">20</text><text x="597" y="572" style="font-size:8px">7</text>

<!-- bottom detail views -->
<text x="146" y="677" style="font-size:8px">接管与壳体焊接</text><path d="M142,679 L192,679" stroke="#f00"/><text x="163" y="686" style="font-size:7px">1:2</text>
<path d="M177,722 L218,722 L218,818 L142,818 L142,788" class="g"/>
<rect x="177" y="722" width="6" height="66" fill="url(#hat)" stroke="#f00"/>
<path d="M142,772 L163,772 L177,766 L177,788 L142,788 Z" fill="url(#hat)" stroke="#f00"/>
<path d="M160,773 L177,766 L177,786 Z" fill="#ff0" opacity="0.7"/>
<path d="M183,788 L196,796 L216,799" class="r"/>
<path d="M120,765 L177,765 M120,772 L140,772 M120,788 L142,788 M123,765 L123,790 M143,745 L177,760 M143,745 L175,740 M170,752 L190,752 M165,805 L178,805 M173,790 L175,810" class="y"/>
<text x="150" y="750" style="font-size:8px">30°</text><text x="118" y="783" transform="rotate(-90 118 783)" style="font-size:8px">14</text><text x="151" y="808" transform="rotate(-90 151 808)" style="font-size:8px">115</text><text x="163" y="800" transform="rotate(-90 167 800)" style="font-size:8px">2±0.5</text>

<text x="357" y="677" style="font-size:8px">补强圈焊接</text><path d="M353,679 L403,679" stroke="#f00"/><text x="374" y="686" style="font-size:7px">1:2</text>
<path d="M404,711 L439,711 L439,822 L339,822 L339,778" class="g"/>
<rect x="402" y="711" width="4" height="67" fill="url(#hat)" stroke="#f00"/>
<path d="M358,748 L402,748 L402,762 L358,762 Z" fill="url(#hat)" stroke="#f00"/>
<path d="M339,762 L402,762 L402,778 L339,778 Z" fill="url(#hat)" stroke="#f00"/>
<path d="M388,748 L402,742 L402,778 L388,778 L376,762 Z" fill="#ff0" opacity="0.6"/>
<path d="M406,778 L420,781 L438,782" class="r"/>
<path d="M325,752 L358,752 M325,762 L339,762 M327,752 L327,778 M363,712 L402,700 M363,712 L395,745 M355,795 L388,778 M355,795 L395,814 M386,730 L405,730 M390,800 L405,800" class="y"/>
<text x="370" y="710" style="font-size:8px">50°</text><text x="367" y="810" style="font-size:8px">50°</text><text x="395" y="725" style="font-size:8px">57</text><text x="323" y="765" transform="rotate(-90 323 765)" style="font-size:8px">14</text>

<text x="566" y="677" style="font-size:8px">接管与壳体焊接</text><path d="M562,679 L612,679" stroke="#f00"/><text x="583" y="686" style="font-size:7px">1:2</text>
<path d="M594,717 L645,717 L645,822 L558,822 L558,777" class="g"/>
<rect x="594" y="717" width="6" height="60" fill="url(#hat)" stroke="#f00"/>
<path d="M558,777 L580,777 L594,768 L594,792 L558,792 Z" fill="url(#hat)" stroke="#f00"/>
<path d="M576,778 L594,768 L594,790 Z" fill="#ff0" opacity="0.7"/>
<path d="M600,792 L615,800 L644,803" class="r"/>
<path d="M538,768 L594,768 M538,792 L558,792 M541,776 L541,792 M560,766 L594,745 M581,757 L605,757 M580,808 L600,808 M590,792 L592,812" class="y"/>
<text x="566" y="760" style="font-size:8px">30°</text><text x="537" y="790" transform="rotate(-90 537 790)" style="font-size:8px">14</text><text x="565" y="815" transform="rotate(-90 565 815)" style="font-size:8px">115</text>
</svg>
</body></html>
